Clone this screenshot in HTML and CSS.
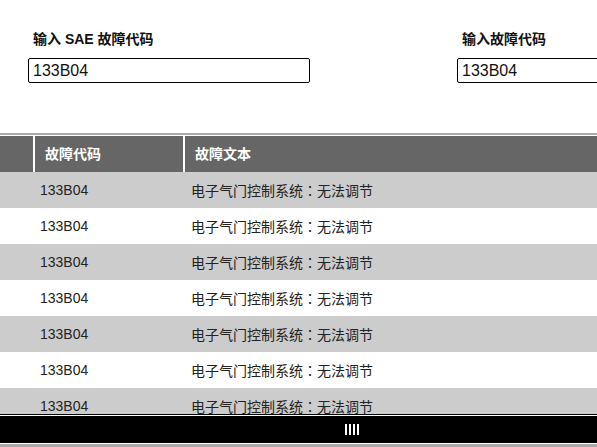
FILE: index.html
```html
<!DOCTYPE html>
<html lang="zh">
<head>
<meta charset="utf-8">
<title>SAE 故障代码</title>
<link rel="stylesheet" href="styles.css">
</head>
<body>
<div class="page">
  <div class="form">
    <div class="field">
      <div class="lbl">输入 SAE 故障代码</div>
      <div class="input">133B04</div>
    </div>
    <div class="field">
      <div class="lbl">输入故障代码</div>
      <div class="input">133B04</div>
    </div>
  </div>
  <div class="rule"></div>
  <div class="head">
    <div class="c0"></div>
    <div class="c1">故障代码</div>
    <div class="c2">故障文本</div>
  </div>
  <div class="rows">
    <div class="row"><div class="c0"></div><div class="c1">133B04</div><div class="c2">电子气门控制系统<span class="colon" lang="ja">：</span>无法调节</div></div>
    <div class="row"><div class="c0"></div><div class="c1">133B04</div><div class="c2">电子气门控制系统<span class="colon" lang="ja">：</span>无法调节</div></div>
    <div class="row"><div class="c0"></div><div class="c1">133B04</div><div class="c2">电子气门控制系统<span class="colon" lang="ja">：</span>无法调节</div></div>
    <div class="row"><div class="c0"></div><div class="c1">133B04</div><div class="c2">电子气门控制系统<span class="colon" lang="ja">：</span>无法调节</div></div>
    <div class="row"><div class="c0"></div><div class="c1">133B04</div><div class="c2">电子气门控制系统<span class="colon" lang="ja">：</span>无法调节</div></div>
    <div class="row"><div class="c0"></div><div class="c1">133B04</div><div class="c2">电子气门控制系统<span class="colon" lang="ja">：</span>无法调节</div></div>
    <div class="row"><div class="c0"></div><div class="c1">133B04</div><div class="c2">电子气门控制系统<span class="colon" lang="ja">：</span>无法调节</div></div>
  </div>
  <div class="footer">
    <div class="footer-inner">
      <div class="grip"><span></span><span></span><span></span><span></span></div>
    </div>
  </div>
  <div class="below"></div>
</div>
</body>
</html>
```

FILE: styles.css
```css
html, body {
  margin: 0;
  padding: 0;
  background: #fff;
}
body {
  width: 597px;
  height: 447px;
  overflow: hidden;
  font-family: "Liberation Sans", "Noto Sans CJK SC", sans-serif;
  color: #222;
}
.page {
  width: 597px;
  height: 447px;
  overflow: hidden;
}
.form {
  height: 133px;
  box-sizing: border-box;
  padding: 31px 0 0 28px;
  display: flex;
  gap: 147px;
  white-space: nowrap;
}
.field {
  flex: 0 0 282px;
  width: 282px;
}
.lbl {
  font-size: 14px;
  font-weight: bold;
  line-height: 16px;
  color: #111;
  padding-left: 5px;
  margin-bottom: 11px;
}
.input {
  box-sizing: border-box;
  height: 25px;
  border: 1px solid #000;
  border-radius: 2px;
  padding-left: 4px;
  font-size: 16px;
  line-height: 23px;
  color: #111;
}
.rule {
  height: 2px;
  background: #aaa;
  margin-bottom: 1px;
}
.head {
  display: flex;
  height: 36px;
  background: #666;
  color: #fff;
  font-size: 14px;
  font-weight: bold;
  line-height: 36px;
}
.head .c0 {
  width: 33px;
  border-right: 2px solid #fff;
}
.head .c1 {
  width: 138px;
  padding-left: 10px;
  border-right: 2px solid #fff;
}
.head .c2 {
  flex: 1;
  padding-left: 10px;
}
.rows {
  height: 242px;
  overflow: hidden;
}
.row {
  display: flex;
  height: 36px;
  line-height: 36px;
  font-size: 14px;
  color: #222;
  background: #fff;
  white-space: nowrap;
}
.row:nth-child(odd) {
  background: #ccc;
}
.row .c0 {
  width: 35px;
}
.row .c1 {
  width: 145px;
  padding-left: 5px;
}
.row .c2 {
  flex: 1;
  padding-left: 6px;
}
.colon {
  font-family: "Noto Sans CJK JP", "Noto Sans CJK TC", sans-serif;
}
.footer {
  border-top: 1px solid #000;
}
.footer-inner {
  border-top: 1px solid #fff;
  border-bottom: 1px solid #fff;
  background: #000;
  height: 27px;
  display: flex;
  align-items: center;
  padding-left: 345px;
}
.grip {
  display: flex;
  gap: 2px;
}
.grip span {
  width: 2px;
  height: 11px;
  background: #fff;
}
.below {
  height: 10px;
  background: #aaa;
}
```
